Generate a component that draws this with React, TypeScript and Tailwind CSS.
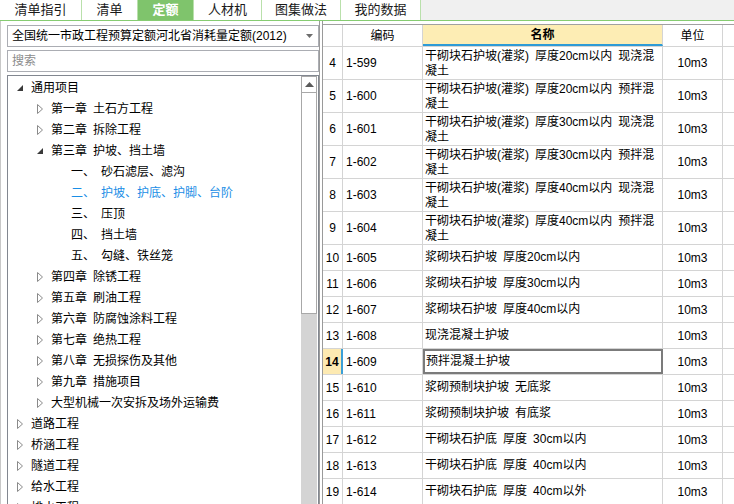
import React from "react";

const tabs = [
  { label: "清单指引", w: "w-[82px]" },
  { label: "清单", w: "w-[56px]" },
  { label: "定额", w: "w-[56px]", active: true },
  { label: "人材机", w: "w-[68px]" },
  { label: "图集做法", w: "w-[79px]" },
  { label: "我的数据", w: "w-[80px]" },
];

type Node = { text: string; level: 0 | 1 | 2; state?: "open" | "closed"; active?: boolean };

const tree: Node[] = [
  { text: "通用项目", level: 0, state: "open" },
  { text: "第一章 土石方工程", level: 1, state: "closed" },
  { text: "第二章 拆除工程", level: 1, state: "closed" },
  { text: "第三章 护坡、挡土墙", level: 1, state: "open" },
  { text: "一、 砂石滤层、滤沟", level: 2 },
  { text: "二、 护坡、护底、护脚、台阶", level: 2, active: true },
  { text: "三、 压顶", level: 2 },
  { text: "四、 挡土墙", level: 2 },
  { text: "五、 勾缝、铁丝笼", level: 2 },
  { text: "第四章 除锈工程", level: 1, state: "closed" },
  { text: "第五章 刷油工程", level: 1, state: "closed" },
  { text: "第六章 防腐蚀涂料工程", level: 1, state: "closed" },
  { text: "第七章 绝热工程", level: 1, state: "closed" },
  { text: "第八章 无损探伤及其他", level: 1, state: "closed" },
  { text: "第九章 措施项目", level: 1, state: "closed" },
  { text: "大型机械一次安拆及场外运输费", level: 1, state: "closed" },
  { text: "道路工程", level: 0, state: "closed" },
  { text: "桥涵工程", level: 0, state: "closed" },
  { text: "隧道工程", level: 0, state: "closed" },
  { text: "给水工程", level: 0, state: "closed" },
  { text: "排水工程", level: 0, state: "closed" },
];

const indent = ["pl-[9px]", "pl-[29px]", "pl-[63px]"];

type Row = { no: number; code: string; name: string[] };

const rows: Row[] = [
  { no: 4, code: "1-599", name: ["干砌块石护坡(灌浆) 厚度20cm以内 现浇混", "凝土"] },
  { no: 5, code: "1-600", name: ["干砌块石护坡(灌浆) 厚度20cm以内 预拌混", "凝土"] },
  { no: 6, code: "1-601", name: ["干砌块石护坡(灌浆) 厚度30cm以内 现浇混", "凝土"] },
  { no: 7, code: "1-602", name: ["干砌块石护坡(灌浆) 厚度30cm以内 预拌混", "凝土"] },
  { no: 8, code: "1-603", name: ["干砌块石护坡(灌浆) 厚度40cm以内 现浇混", "凝土"] },
  { no: 9, code: "1-604", name: ["干砌块石护坡(灌浆) 厚度40cm以内 预拌混", "凝土"] },
  { no: 10, code: "1-605", name: ["浆砌块石护坡 厚度20cm以内"] },
  { no: 11, code: "1-606", name: ["浆砌块石护坡 厚度30cm以内"] },
  { no: 12, code: "1-607", name: ["浆砌块石护坡 厚度40cm以内"] },
  { no: 13, code: "1-608", name: ["现浇混凝土护坡"] },
  { no: 14, code: "1-609", name: ["预拌混凝土护坡"] },
  { no: 15, code: "1-610", name: ["浆砌预制块护坡 无底浆"] },
  { no: 16, code: "1-611", name: ["浆砌预制块护坡 有底浆"] },
  { no: 17, code: "1-612", name: ["干砌块石护底 厚度 30cm以内"] },
  { no: 18, code: "1-613", name: ["干砌块石护底 厚度 40cm以内"] },
  { no: 19, code: "1-614", name: ["干砌块石护底 厚度 40cm以外"] },
];

// spaces in the original are a fixed 6px wide
const Txt = ({ s }: { s: string }) => (
  <>
    {s.split(" ").map((p, i) => (
      <React.Fragment key={i}>
        {i > 0 && <span className="inline-block w-[6px]" />}
        {p}
      </React.Fragment>
    ))}
  </>
);

const Arrow = ({ state }: { state?: "open" | "closed" }) => (
  <span className="w-[14px] h-[21px] flex items-center">
    {state === "open" && (
      <svg width="6" height="6" viewBox="0 0 6 6">
        <polygon points="6,0 6,6 0,6" fill="#3a3a3a" />
      </svg>
    )}
    {state === "closed" && (
      <svg width="6" height="10" viewBox="0 0 6 10">
        <polygon points="0.5,0.5 5.5,5 0.5,9.5" fill="#fff" stroke="#8a8a8a" />
      </svg>
    )}
  </span>
);

const App = () => {
  return (
    <div
      className="w-[734px] h-[504px] overflow-hidden bg-white flex flex-col text-[12px] text-black"
      style={{ fontFamily: '"Liberation Sans", "Noto Sans CJK SC", sans-serif' }}
    >
      {/* Tab bar */}
      <div className="h-[21px] flex border-b border-[#86cc72] bg-[#f0f0f0] shrink-0">
        {tabs.map((t) => (
          <div
            key={t.label}
            className={`${t.w} h-[20px] flex items-center justify-center border-r border-[#b9e0ab] text-[13px] ${
              t.active ? "bg-[#7fc46c] text-white font-bold" : "bg-white text-[#1a1a1a]"
            }`}
          >
            {t.label}
          </div>
        ))}
      </div>

      <div className="flex flex-1 min-h-0">
        {/* Left panel */}
        <div className="w-[319px] flex flex-col pl-[6px] pt-[4px] border-l border-[#c8c8c8]">
          <div className="h-[22px] border border-[#abadb3] flex items-center pl-[4px] pr-[5px] justify-between">
            <span className="whitespace-nowrap">全国统一市政工程预算定额河北省消耗量定额(2012)</span>
            <svg width="7" height="4" viewBox="0 0 7 4">
              <polygon points="0,0 7,0 3.5,4" fill="#6d6d6d" />
            </svg>
          </div>
          <div className="mt-[3px] h-[22px] border border-[#abadb3] flex items-center pl-[4px] text-[#8c8c8c]">
            搜索
          </div>
          <div className="mt-[3px] flex-1 min-h-0 border border-b-0 border-[#828790] flex">
            <div className="flex-1 overflow-hidden pt-px">
              {tree.map((n) => (
                <div
                  key={n.text}
                  className={`h-[21px] flex items-center whitespace-nowrap ${indent[n.level]} ${
                    n.active ? "text-[#1a8ee6]" : ""
                  }`}
                >
                  {n.level < 2 && <Arrow state={n.state} />}
                  <span>
                    <Txt s={n.text} />
                  </span>
                </div>
              ))}
            </div>
            {/* Scrollbar */}
            <div className="w-[16px] flex flex-col bg-[#d4d4d4] mr-px">
              <div className="h-[17px] border border-[#a8a8a8] bg-white flex items-center justify-center">
                <svg width="9" height="5" viewBox="0 0 9 5">
                  <polygon points="4.5,0 9,5 0,5" fill="#5a5a5a" />
                </svg>
              </div>
              <div className="h-[221px] border border-t-0 border-[#a8a8a8] bg-white" />
            </div>
          </div>
        </div>

        {/* Divider */}
        <div className="w-[4px] border-l border-r border-[#9a9a9a]" />

        {/* Table */}
        <div className="flex-1 pt-[3px] flex flex-col">
          <div className="h-[23px] flex border-t border-b border-t-[#a0a0a0] border-b-[#d4d4d4] shrink-0">
            <div className="w-[20px] border-r border-[#d4d4d4]" />
            <div className="w-[80px] border-r border-[#d4d4d4] flex items-center justify-center">编码</div>
            <div className="w-[240px] border-r border-[#d4d4d4] bg-[#fdedb4] flex items-center justify-center font-bold border-b-2 border-b-[#2e9bd6]">
              名称
            </div>
            <div className="w-[60px] border-r border-[#d4d4d4] flex items-center justify-center">单位</div>
            <div className="flex-1" />
          </div>
          {rows.map((r) => {
            const sel = r.no === 14;
            return (
              <div
                key={r.no}
                className={`flex border-b border-[#d4d4d4] shrink-0 ${r.name.length > 1 ? "h-[33px]" : "h-[26px]"}`}
              >
                <div
                  className={`w-[20px] flex items-center justify-center ${
                    sel ? "bg-[#fdeab2] font-bold border-r-2 border-[#3b9fd8]" : "border-r border-[#d4d4d4]"
                  }`}
                >
                  {r.no}
                </div>
                <div className="w-[80px] border-r border-[#d4d4d4] flex items-center pl-[3px]">{r.code}</div>
                <div
                  className={`w-[240px] flex flex-col ${r.name.length > 1 ? "pt-[2px]" : "justify-center"} ${
                    sel ? "border-2 border-[#7b7b7b] pl-px" : "border-r border-[#d4d4d4] pl-[2px]"
                  }`}
                >
                  {r.name.map((l) => (
                    <div key={l} className="leading-[15px] whitespace-nowrap">
                      <Txt s={l} />
                    </div>
                  ))}
                </div>
                <div className="w-[60px] border-r border-[#d4d4d4] flex items-center justify-center">10m3</div>
                <div className="flex-1" />
              </div>
            );
          })}
        </div>
      </div>
    </div>
  );
};

export default App;
